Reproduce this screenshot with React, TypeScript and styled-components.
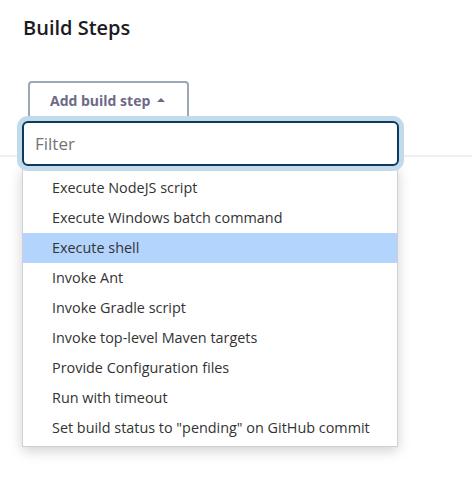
import React from "react";
import styled, { createGlobalStyle } from "styled-components";

const Global = createGlobalStyle`
  html, body { margin: 0; padding: 0; background: #fff; }
  body { font-family: "Open Sans", "Noto Sans", sans-serif; color: #333; }
`;

const Page = styled.div`
  padding: 14px 0 0 23px;
  height: 488px;
`;

const Title = styled.h2`
  margin: 0;
  font-size: 20px;
  line-height: 28px;
  font-weight: 600;
  color: #1b1b1f;
`;

const StepArea = styled.div`
  position: relative;
  margin: 39px 0 0 5px;
`;

const AddButton = styled.button`
  display: flex;
  align-items: center;
  gap: 7px;
  height: 38px;
  width: 161px;
  padding: 0 0 0 20px;
  border: 2px solid #9aa8b6;
  border-radius: 4px;
  background: #fff;
  font-family: inherit;
  font-size: 14px;
  font-weight: 700;
  color: #6c6a85;
`;

const Caret = styled.span`
  width: 0;
  height: 0;
  border-left: 4px solid transparent;
  border-right: 4px solid transparent;
  border-bottom: 4px solid #6c6a85;
  margin-top: -1px;
`;

const Separator = styled.div`
  margin: 36px 0 0 -28px;
  height: 2px;
  background: #eef0f5;
`;

const Dropdown = styled.div`
  position: absolute;
  top: 40px;
  left: -6px;
  width: 377px;
  z-index: 2;
`;

const FilterInput = styled.input`
  display: block;
  box-sizing: border-box;
  width: 100%;
  height: 45px;
  padding: 0 11px;
  border: 2px solid #0e3b5d;
  border-radius: 6px;
  box-shadow: 0 0 0 5px #c2dbea;
  font-family: inherit;
  font-size: 17px;
  color: #333;
  outline: none;
  position: relative;
  z-index: 1;
  &::placeholder { color: #747474; }
`;

const Menu = styled.ul`
  list-style: none;
  margin: 0;
  padding: 7px 0 3px;
  width: 376px;
  box-sizing: border-box;
  background: #fff;
  border: 1px solid #cdd1d5;
  border-top: none;
  box-shadow: 0 4px 12px rgba(0, 0, 0, 0.18);
`;

const Item = styled.li<{ $active?: boolean }>`
  height: 30px;
  line-height: 30px;
  padding-left: 29px;
  font-size: 14.4px;
  color: #333;
  white-space: nowrap;
  background: ${(p) => (p.$active ? "#b3d4fd" : "transparent")};
`;

const items = [
  "Execute NodeJS script",
  "Execute Windows batch command",
  "Execute shell",
  "Invoke Ant",
  "Invoke Gradle script",
  "Invoke top-level Maven targets",
  "Provide Configuration files",
  "Run with timeout",
  'Set build status to "pending" on GitHub commit',
];

export default function App() {
  return (
    <>
      <Global />
      <Page>
        <Title>Build Steps</Title>
        <StepArea>
          <AddButton>
            Add build step <Caret />
          </AddButton>
          <Separator />
          <Dropdown>
            <FilterInput placeholder="Filter" />
            <Menu>
              {items.map((t) => (
                <Item key={t} $active={t === "Execute shell"}>
                  {t}
                </Item>
              ))}
            </Menu>
          </Dropdown>
        </StepArea>
      </Page>
    </>
  );
}
